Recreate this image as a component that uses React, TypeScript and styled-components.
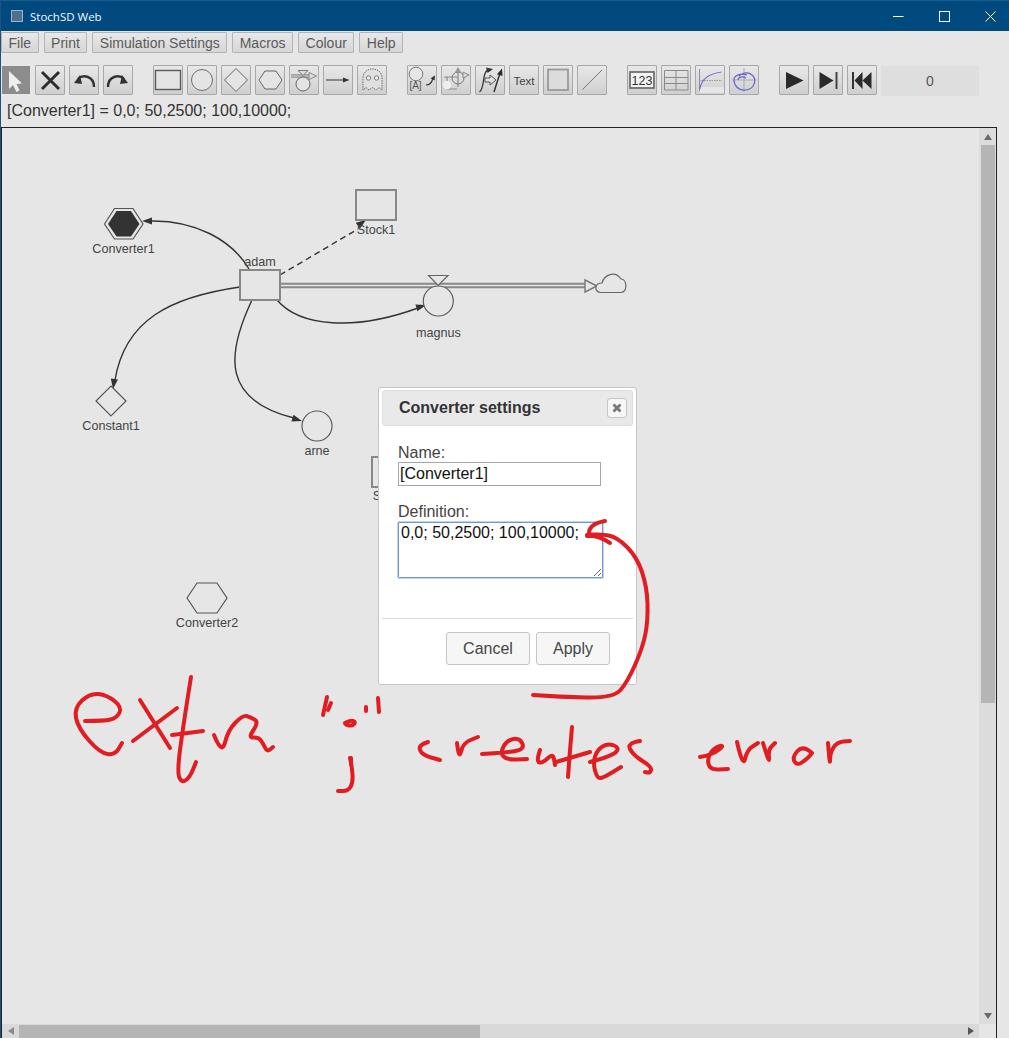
import React from 'react';
import styled, { createGlobalStyle } from 'styled-components';

const GlobalStyle = createGlobalStyle`
  html, body {
    margin: 0;
    padding: 0;
    background: #e6e6e6;
  }
  * {
    box-sizing: border-box;
  }
`;

const FONT = '"Liberation Sans", Arial, sans-serif';

// hand drawn note on top of the screenshot, points in canvas coordinates
const NOTE_STROKES: number[][][] = [
  // e
  [[85, 721], [104, 721], [117, 718], [122, 707], [107, 695], [90, 693], [74, 708], [78, 728], [100, 753], [115, 755], [122, 743]],
  // x
  [[140, 700], [170, 748]],
  [[177, 708], [133, 741]],
  // t
  [[191, 677], [183, 727], [177, 773], [182, 783], [190, 777], [196, 762]],
  [[172, 735], [203, 731]],
  // ra
  [[214, 735], [222, 755], [228, 730], [243, 715], [250, 717], [259, 722], [248, 738], [258, 737], [263, 743], [267, 752], [273, 747]],
  // quotes and semicolon
  [[327, 697], [323, 715]],
  [[331, 703], [328, 710]],
  [[345, 723], [350, 720], [356, 722], [352, 726], [346, 725], [345, 723]],
  [[366, 707], [366, 711]],
  [[378, 698], [379, 712]],
  [[350, 758], [352, 767], [353, 783], [348, 791], [338, 791]],
  [[351, 758], [351, 764]],
  // creates
  [[428, 742], [418, 745], [422, 755], [440, 760]],
  [[457, 743], [459, 760], [463, 743], [478, 737]],
  [[482, 754], [500, 753], [525, 750], [520, 738], [507, 740], [500, 753], [507, 760], [527, 759]],
  [[540, 750], [536, 762], [543, 763], [553, 753], [555, 765]],
  [[572, 727], [570, 750], [568, 777]],
  [[556, 762], [590, 752]],
  [[590, 762], [612, 756], [620, 748], [608, 743], [597, 750], [593, 763], [597, 778], [603, 778], [621, 767]],
  [[640, 741], [627, 743], [633, 755], [652, 767], [650, 773], [645, 772]],
  // error
  [[700, 757], [712, 755], [725, 745], [715, 747], [707, 758], [710, 770], [728, 769]],
  [[737, 742], [743, 768], [747, 750], [758, 743]],
  [[763, 743], [770, 766], [768, 750], [775, 743]],
  [[812, 753], [803, 745], [792, 757], [797, 766], [808, 758], [812, 753]],
  [[828, 743], [830, 767], [830, 753], [837, 742], [850, 741]],
  // big arrow pointing at the semicolon
  [[533, 695], [560, 697], [613, 698], [627, 683], [643, 647], [648, 620], [647, 587], [637, 557], [617, 537], [600, 534], [587, 535]],
  [[605, 521], [593, 523], [587, 535], [600, 537], [610, 543]],
  [[587, 536], [601, 536]],
];

// quadratic smoothing through the midpoints
const smooth = (pts: number[][]) => {
  if (pts.length < 3) return `M${pts[0]} L${pts[1]}`;
  let d = `M${pts[0]}`;
  for (let i = 1; i < pts.length - 1; i++) {
    const mx = (pts[i][0] + pts[i + 1][0]) / 2;
    const my = (pts[i][1] + pts[i + 1][1]) / 2;
    d += ` Q${pts[i]} ${mx},${my}`;
  }
  return d + ` L${pts[pts.length - 1]}`;
};

const Icons = {
  select: <path d="M8 6 V24 L12 20 L15.5 27 L18.5 25.5 L15.5 19 L21 18.5 Z" fill="#efefef" />,
  remove: <path d="M7 7 L24 24 M24 7 L7 24" stroke="#2e2e2e" strokeWidth="3" fill="none" />,
  undo: (
    <>
      <path d="M25 22 C25 11 14 9 9 14" stroke="#333" strokeWidth="2.4" fill="none" />
      <path d="M5 18 L11 10 L13 19 Z" fill="#333" />
    </>
  ),
  redo: (
    <>
      <path d="M5 22 C5 11 16 9 21 14" stroke="#333" strokeWidth="2.4" fill="none" />
      <path d="M25 18 L19 10 L17 19 Z" fill="#333" />
    </>
  ),
  stock: <rect x="2.5" y="5.5" width="25" height="19" fill="#e4e4e4" stroke="#5a5a5a" strokeWidth="1.4" />,
  auxiliary: <circle cx="15" cy="15" r="10.5" fill="#e4e4e4" stroke="#707070" />,
  constant: <path d="M15 3.5 L26.5 15 L15 26.5 L3.5 15 Z" fill="#e4e4e4" stroke="#666" />,
  converter: <path d="M4 15 L10 6 H21 L27 15 L21 24 H10 Z" fill="#e4e4e4" stroke="#666" />,
  flow: (
    <>
      <path d="M2 11 H20" stroke="#888" strokeWidth="3.4" />
      <path d="M2 11 H21" stroke="#ddd" strokeWidth="1" />
      <path d="M20 7.5 L27.5 11 L20 14.5 Z" fill="#ddd" stroke="#888" />
      <path d="M9 5.5 H19 L14 10.5 Z" fill="#ddd" stroke="#777" />
      <circle cx="14" cy="19" r="7" fill="#e4e4e4" stroke="#666" />
    </>
  ),
  link: (
    <>
      <path d="M3 15 H22" stroke="#333" />
      <path d="M20 12.5 L26.5 15 L20 17.5 Z" fill="#333" />
    </>
  ),
  ghost: (
    <>
      <path
        d="M6 25 V13 C6 1 25 1 25 13 V25 L22 22.5 L19 25 L15.5 22.5 L12 25 L9 22.5 Z"
        fill="#e0e0e0"
        stroke="#666"
        strokeDasharray="1.4 1"
      />
      <circle cx="11.5" cy="13" r="2.2" fill="#eee" stroke="#666" strokeWidth="0.8" />
      <circle cx="19.5" cy="13" r="2.2" fill="#eee" stroke="#666" strokeWidth="0.8" />
    </>
  ),
  rename: (
    <>
      <circle cx="9" cy="9" r="6.8" fill="#e6e6e6" stroke="#777" />
      <text x="8.5" y="24" fontSize="10" textAnchor="middle" fill="#555" fontFamily={FONT}>[A]</text>
      <path d="M19 20 C23 20 25 17 26 13" stroke="#333" strokeWidth="1.2" fill="none" />
      <path d="M28 10.5 L27.6 15.5 L23.6 13.2 Z" fill="#333" />
    </>
  ),
  move: (
    <>
      <path d="M3 12 H17 M6 12 V24 H16 M17 3 V22" stroke="#8c8c8c" strokeWidth="1.2" fill="none" />
      <circle cx="6" cy="20" r="4.2" fill="#eee" />
      <circle cx="17" cy="13" r="6" fill="none" stroke="#777" />
      <path d="M17 2 L20 7 H14 Z" fill="#999" />
      <path d="M22 7 L28 10 L22 13 Z" fill="#ddd" stroke="#888" />
    </>
  ),
  rewire: (
    <>
      <path d="M4.5 27 C10 23 7 9 12 5.5 L16 4.5" stroke="#333" strokeWidth="1.3" fill="none" />
      <path d="M11 2.5 L18 4 L12.5 8 Z" fill="#333" />
      <path d="M10 13 H15 V10 L21 15 L15 20 V17 H10 Z" fill="#e2e2e2" stroke="#555" />
      <path d="M19 27 L25 8" stroke="#2c2c2c" strokeWidth="1.4" />
      <path d="M27 3.5 L27.5 11 L22 9.3 Z" fill="#2c2c2c" />
    </>
  ),
  text: <text x="15" y="19.5" fontSize="11.5" textAnchor="middle" fill="#444" fontFamily={FONT}>Text</text>,
  rectangle: <rect x="5" y="4.5" width="20" height="20.5" fill="#dcdcdc" stroke="#9a9a9a" strokeWidth="1.8" />,
  line: <path d="M5.5 24.5 L25 5" stroke="#777" fill="none" />,
  number: (
    <>
      <rect x="3" y="7" width="24" height="16" fill="#f3f3f3" stroke="#707070" strokeWidth="1.8" />
      <text x="15" y="19.5" fontSize="12.5" textAnchor="middle" fill="#333" fontFamily={FONT}>123</text>
    </>
  ),
  table: <path d="M3.5 5.5 H27 V25 H3.5 Z M3.5 12.5 H27 M3.5 18.5 H27 M15 5.5 V25" fill="none" stroke="#8a8a8a" />,
  timePlot: (
    <>
      <rect x="5" y="22" width="24" height="6" fill="#e6e6e6" />
      <path d="M4.5 4 V26" stroke="#8b8bb0" fill="none" />
      <path d="M4 15.5 H27" stroke="#999" strokeDasharray="1.5 1" fill="none" />
      <path d="M5 24 C6 15 12 9 26.5 7" stroke="#6f6fd0" strokeWidth="1.2" fill="none" />
    </>
  ),
  xyPlot: (
    <>
      <path d="M15 3 V27 M3 15 H27" stroke="#aaa" fill="none" />
      <path
        d="M10 11 C14 7 20 7 23 10 C28 14 26 24 17 25 C9 26 5 20 5 15 C5 10 12 8 18 10 M9 15 C9 12 14 11 17 13"
        stroke="#6262d6"
        strokeWidth="1.2"
        fill="none"
      />
    </>
  ),
  play: <path d="M7 7 L24.5 15.5 L7 24 Z" fill="#2a2a2a" />,
  step: (
    <>
      <path d="M6.5 7 L20.5 15.5 L6.5 24 Z" fill="#2a2a2a" />
      <rect x="22.5" y="7" width="2" height="17" fill="#444" />
    </>
  ),
  reset: (
    <>
      <rect x="5" y="7" width="2" height="17" fill="#333" />
      <path d="M7.5 15.5 L15.5 7 V24 Z M15.5 15.5 L24.5 7 V24 Z" fill="#2a2a2a" />
    </>
  ),
};

type IconName = keyof typeof Icons;

const TOOL_GROUPS: IconName[][] = [
  ['select', 'remove', 'undo', 'redo'],
  ['stock', 'auxiliary', 'constant', 'converter', 'flow', 'link', 'ghost'],
  ['rename', 'move', 'rewire', 'text', 'rectangle', 'line'],
  ['number', 'table', 'timePlot', 'xyPlot'],
];

const MENU_ITEMS = ['File', 'Print', 'Simulation Settings', 'Macros', 'Colour', 'Help'];

const Arrowhead = ({ x, y, angle }: { x: number; y: number; angle: number }) => (
  <path d="M0 0 L-10 -3.6 L-10 3.6 Z" fill="#333" transform={`translate(${x} ${y}) rotate(${angle})`} />
);

const Diagram = () => (
  <Drawing viewBox="2 128 977 896">
    {/* links */}
    <Wire d="M249 269 C232 240 195 220 150 221" />
    <Arrowhead x={142} y={221} angle={180} />
    <Wire d="M280 275 L358 229" strokeDasharray="6 4" />
    <Arrowhead x={366} y={220} angle={-35} />
    <Wire d="M277 300 C300 327 355 331 418 308" />
    <Arrowhead x={426} y={305} angle={-17} />
    <Wire d="M240 287 C170 297 125 320 115 380" />
    <Arrowhead x={113} y={389} angle={98} />
    <Wire d="M252 300 C226 355 222 400 294 418" />
    <Arrowhead x={302} y={421} angle={17} />

    {/* flow with valve and cloud */}
    <path d="M280 285.5 H586" stroke="#888" strokeWidth="5.5" fill="none" />
    <path d="M280 285.5 H587" stroke="#e6e6e6" strokeWidth="1.6" fill="none" />
    <path d="M585 280 L597 286 L585 292 Z" fill="#e6e6e6" stroke="#777" strokeWidth="1.4" />
    <path d="M428.5 275.5 H448 L438.2 285.5 Z" fill="#e6e6e6" stroke="#666" strokeWidth="1.2" />
    <path
      d="M601 292.5 C594 292.5 594 283 602 283 C604 275 615 270 621 279 C627 279 628 292.5 621 292.5 Z"
      fill="#e6e6e6"
      stroke="#666"
      strokeWidth="1.2"
    />

    {/* nodes */}
    <Box x="240" y="270" width="40" height="30" />
    <Box x="356" y="190" width="40" height="30" />
    <Box x="372" y="457" width="40" height="30" />
    <Ring cx="438.3" cy="301" r="15" />
    <Ring cx="317" cy="426" r="15" />
    <Shape points="111,386 126,401 111,416 96,401" />
    <Shape points="187,598 197,583 217,583 227,598 217,613 197,613" />
    <Shape points="104.5,224 114.5,208.5 133,208.5 143,224 133,239 114.5,239" stroke="#888" strokeWidth="1.4" />
    <polygon points="108,224 116.5,211 131,211 139.5,224 131,236.5 116.5,236.5" fill="#333" />

    {/* labels */}
    <Label x="123.5" y="253">Converter1</Label>
    <Label x="260" y="266">adam</Label>
    <Label x="376" y="234">Stock1</Label>
    <Label x="438.5" y="337">magnus</Label>
    <Label x="111" y="430">Constant1</Label>
    <Label x="317" y="455">arne</Label>
    <Label x="392" y="500">Stock2</Label>
    <Label x="207" y="627">Converter2</Label>
  </Drawing>
);

const App: React.FC = () => {
  return (
    <Window>
      <GlobalStyle />
      <TitleBar>
        <AppIcon />
        <TitleText>StochSD Web</TitleText>
        <WindowControls>
          <WindowButton>
            <svg width="11" height="11" viewBox="0 0 11 11"><path d="M0 5.5 H10.5" stroke="#fff" /></svg>
          </WindowButton>
          <WindowButton>
            <svg width="11" height="11" viewBox="0 0 11 11"><rect x="0.5" y="0.5" width="10" height="10" fill="none" stroke="#fff" /></svg>
          </WindowButton>
          <WindowButton>
            <svg width="11" height="11" viewBox="0 0 11 11"><path d="M0.5 0.5 L10.5 10.5 M10.5 0.5 L0.5 10.5" stroke="#fff" /></svg>
          </WindowButton>
        </WindowControls>
      </TitleBar>

      <MenuBar>
        {MENU_ITEMS.map((item) => (
          <MenuButton key={item}>{item}</MenuButton>
        ))}
      </MenuBar>

      <Toolbar>
        {TOOL_GROUPS.map((group, i) => (
          <ToolGroup key={i}>
            {group.map((name) => (
              <ToolButton key={name} $active={name === 'select'}>
                <svg width="28" height="28" viewBox="1 1 28 28">{Icons[name]}</svg>
              </ToolButton>
            ))}
          </ToolGroup>
        ))}
        <ToolGroup>
          <ToolButton><svg width="28" height="28" viewBox="1 1 28 28">{Icons.play}</svg></ToolButton>
          <ToolButton><svg width="28" height="28" viewBox="1 1 28 28">{Icons.step}</svg></ToolButton>
          <ToolButton><svg width="28" height="28" viewBox="1 1 28 28">{Icons.reset}</svg></ToolButton>
          <TimeBox>0</TimeBox>
        </ToolGroup>
      </Toolbar>

      <StatusLine>[Converter1] = 0,0; 50,2500; 100,10000;</StatusLine>

      <CanvasFrame>
        <Canvas>
          <Diagram />
          <Dialog>
            <DialogTitle>
              Converter settings
              <CloseButton>
                <svg width="10" height="10" viewBox="0 0 10 10">
                  <path d="M1.5 1.5 L8.5 8.5 M8.5 1.5 L1.5 8.5" stroke="#777" strokeWidth="2.8" />
                </svg>
              </CloseButton>
            </DialogTitle>
            <DialogBody>
              <FieldLabel>Name:</FieldLabel>
              <NameInput defaultValue="[Converter1]" />
              <FieldLabel $spaced>Definition:</FieldLabel>
              <DefinitionInput defaultValue="0,0; 50,2500; 100,10000;" />
            </DialogBody>
            <DialogActions>
              <DialogButton $width={84}>Cancel</DialogButton>
              <DialogButton $width={74}>Apply</DialogButton>
            </DialogActions>
          </Dialog>
          <Note viewBox="2 128 977 896">
            {NOTE_STROKES.map((pts, i) => (
              <path key={i} d={smooth(pts)} />
            ))}
          </Note>
        </Canvas>

        <VerticalBar>
          <ScrollArrow>
            <svg width="8" height="6" viewBox="0 0 8 6"><path d="M4 0 L8 6 H0 Z" fill="#6a6a6a" /></svg>
          </ScrollArrow>
          <VerticalTrack>
            <VerticalThumb />
          </VerticalTrack>
          <ScrollArrow>
            <svg width="8" height="6" viewBox="0 0 8 6"><path d="M4 6 L8 0 H0 Z" fill="#6a6a6a" /></svg>
          </ScrollArrow>
        </VerticalBar>

        <HorizontalBar>
          <ScrollArrow>
            <svg width="6" height="8" viewBox="0 0 6 8"><path d="M0 4 L6 0 V8 Z" fill="#8a8a8a" /></svg>
          </ScrollArrow>
          <HorizontalTrack>
            <HorizontalThumb />
          </HorizontalTrack>
          <ScrollArrow>
            <svg width="6" height="8" viewBox="0 0 6 8"><path d="M6 4 L0 0 V8 Z" fill="#555" /></svg>
          </ScrollArrow>
        </HorizontalBar>
        <ScrollCorner />
      </CanvasFrame>
    </Window>
  );
};

const Window = styled.div`
  display: flex;
  flex-direction: column;
  width: 1009px;
  height: 1038px;
  overflow: hidden;
  background: #e6e6e6;
  border-left: 1px solid #1d527f;
  font-family: ${FONT};
`;

const TitleBar = styled.div`
  display: flex;
  align-items: center;
  flex: 0 0 31px;
  padding-left: 10px;
  background: #004a80;
  border-top: 1px solid #1c5c8d;
`;

const AppIcon = styled.div`
  width: 12px;
  height: 12px;
  background: #50708f;
  border: 1px solid #9db4c8;
`;

const TitleText = styled.span`
  margin-left: 7px;
  color: #f4f7fa;
  font-family: 'Open Sans', sans-serif;
  font-size: 11.5px;
`;

const WindowControls = styled.div`
  display: flex;
  margin-left: auto;
  margin-right: -4px;
`;

const WindowButton = styled.div`
  display: flex;
  align-items: center;
  justify-content: center;
  width: 46px;
  height: 30px;
`;

const MenuBar = styled.div`
  display: flex;
  gap: 5px;
  padding-top: 1px;
  flex: 0 0 22px;
`;

const MenuButton = styled.button`
  height: 21px;
  padding: 0 6.5px;
  background: linear-gradient(#e8e8e8, #d6d6d6);
  border: 1px solid #b4b4b4;
  border-radius: 1px;
  color: #5a5a5a;
  font-family: ${FONT};
  font-size: 14px;
`;

const Toolbar = styled.div`
  display: flex;
  gap: 20px;
  margin-top: 12px;
  flex: 0 0 31px;
`;

const ToolGroup = styled.div`
  display: flex;
  gap: 4px;
`;

const ToolButton = styled.button<{ $active?: boolean }>`
  display: flex;
  width: 30px;
  height: 30px;
  padding: 0;
  background: ${(p) => (p.$active ? '#8c8c8c' : 'linear-gradient(#e8e8e8, #cfcfcf)')};
  background-clip: padding-box;
  border: 1px solid ${(p) => (p.$active ? 'transparent' : '#a8a8a8')};
  border-radius: 1px;
`;

const TimeBox = styled.div`
  display: flex;
  align-items: center;
  justify-content: center;
  width: 98px;
  height: 30px;
  margin-top: 1px;
  background: #dedede;
  color: #555;
  font-size: 14px;
`;

const StatusLine = styled.div`
  flex: 0 0 31px;
  padding: 6px 0 0 6px;
  color: #333;
  font-size: 16px;
  line-height: 18px;
`;

const CanvasFrame = styled.div`
  display: grid;
  grid-template-columns: 977px 17px;
  grid-template-rows: 896px 14px;
  width: 996px;
  height: 911px;
  border: 1px solid #222;
  border-bottom: none;
`;

const Canvas = styled.div`
  position: relative;
  overflow: hidden;
  background: #e6e6e6;
`;

const Drawing = styled.svg`
  display: block;
  width: 977px;
  height: 896px;
`;

const Wire = styled.path`
  fill: none;
  stroke: #333;
  stroke-width: 1.4;
`;

const Box = styled.rect`
  fill: #e6e6e6;
  stroke: #888;
  stroke-width: 2;
`;

const Ring = styled.circle`
  fill: #e6e6e6;
  stroke: #5c5c5c;
  stroke-width: 1.2;
`;

const Shape = styled.polygon`
  fill: #e6e6e6;
  stroke: #555;
  stroke-width: 1.2;
`;

const Label = styled.text`
  fill: #444;
  font-family: ${FONT};
  font-size: 12.6px;
  text-anchor: middle;
`;

const Dialog = styled.div`
  position: absolute;
  left: 376px;
  top: 259px;
  display: flex;
  flex-direction: column;
  width: 259px;
  height: 298px;
  padding: 2px 3px;
  background: #fff;
  border: 1px solid #c5c5c5;
  border-radius: 3px;
`;

const DialogTitle = styled.div`
  display: flex;
  align-items: center;
  justify-content: space-between;
  height: 36px;
  padding: 0 5px 0 16px;
  background: #e9e9e9;
  border: 1px solid #dddddd;
  border-radius: 3px;
  color: #333;
  font-size: 16px;
  font-weight: bold;
`;

const CloseButton = styled.div`
  display: flex;
  align-items: center;
  justify-content: center;
  width: 20px;
  height: 20px;
  background: #f6f6f6;
  border: 1px solid #c5c5c5;
  border-radius: 3px;
`;

const DialogBody = styled.div`
  display: flex;
  flex-direction: column;
  align-items: flex-start;
  height: 193px;
  padding: 18px 0 0 16px;
  border-bottom: 1px solid #dcdcdc;
`;

const FieldLabel = styled.label<{ $spaced?: boolean }>`
  margin-top: ${(p) => (p.$spaced ? '17px' : '0')};
  color: #444;
  font-size: 16px;
  line-height: 18px;
`;

const NameInput = styled.input`
  width: 203px;
  height: 24px;
  padding: 0 1px;
  background: #fff;
  border: 1px solid #a6a6a6;
  border-radius: 0;
  color: #111;
  font-family: ${FONT};
  font-size: 16px;
  outline: none;
`;

const DefinitionInput = styled.textarea`
  display: block;
  width: 205px;
  height: 56px;
  margin-top: 1px;
  padding: 1px 2px;
  background: #fff;
  border: 1px solid #6f97d8;
  border-radius: 1px;
  box-shadow: 0 0 0 1px rgba(123, 159, 214, 0.45);
  color: #111;
  font-family: ${FONT};
  font-size: 16px;
  outline: none;
`;

const DialogActions = styled.div`
  display: flex;
  justify-content: flex-end;
  gap: 6px;
  padding: 13px 23px 0 0;
`;

const DialogButton = styled.button<{ $width: number }>`
  width: ${(p) => p.$width}px;
  height: 33px;
  padding: 0;
  background: #f6f6f6;
  border: 1px solid #c5c5c5;
  border-radius: 3px;
  color: #454545;
  font-family: ${FONT};
  font-size: 16px;
`;

const Note = styled.svg`
  position: absolute;
  left: 0;
  top: 0;
  width: 977px;
  height: 896px;
  fill: none;
  stroke: #e11d22;
  stroke-width: 4;
  stroke-linecap: round;
  stroke-linejoin: round;
  pointer-events: none;
`;

const VerticalBar = styled.div`
  display: flex;
  flex-direction: column;
  background: #dcdcdc;
`;

const ScrollArrow = styled.div`
  display: flex;
  align-items: center;
  justify-content: center;
  flex: 0 0 17px;
`;

const VerticalTrack = styled.div`
  flex: 1;
  padding-left: 2px;
`;

const VerticalThumb = styled.div`
  width: 14px;
  height: 558px;
  background: #b5b5b5;
`;

const HorizontalBar = styled.div`
  display: flex;
  background: #d9d9d9;
`;

const HorizontalTrack = styled.div`
  flex: 1;
  padding-top: 1px;
`;

const HorizontalThumb = styled.div`
  width: 461px;
  height: 13px;
  background: #b5b5b5;
`;

const ScrollCorner = styled.div`
  background: #e6e6e6;
`;

export default App;
